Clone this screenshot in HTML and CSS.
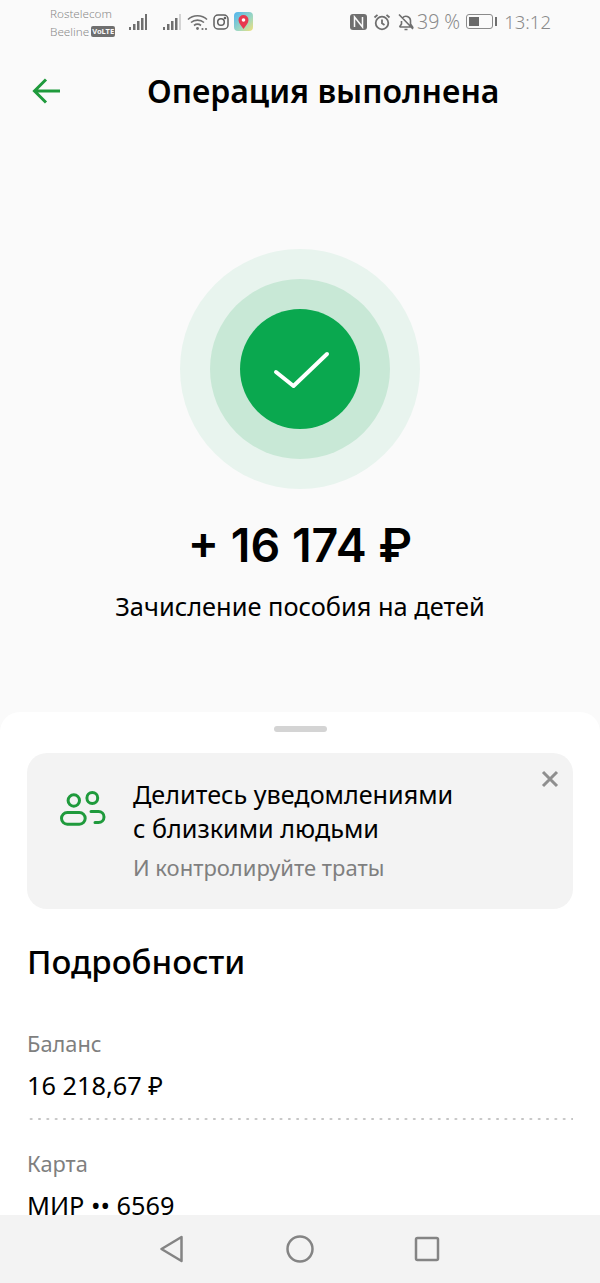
FILE: index.html
```html
<!DOCTYPE html>
<html lang="ru">
<head>
  <meta charset="UTF-8" />
  <title>Операция выполнена</title>
  <link rel="stylesheet" href="styles.css">
</head>
<body>
  <div class="screen">
    <div class="status-bar">
      <div class="operators">
        <div>Rostelecom</div>
        <div class="op-row">Beeline <span class="volte">VoLTE</span></div>
      </div>
      <svg class="signal" width="18" height="18" viewBox="0 0 18 18">
        <g fill="#6f6f6f">
          <rect x="0" y="14" width="2" height="3"/><rect x="4" y="11" width="2.500" height="6"/>
          <rect x="8" y="8" width="2.500" height="9"/><rect x="12" y="5" width="2.500" height="12"/>
          <rect x="16" y="1" width="2" height="16"/>
        </g>
      </svg>
      <svg class="signal second" width="18" height="18" viewBox="0 0 18 18">
        <g fill="#6f6f6f">
          <rect x="0" y="14" width="2" height="3"/><rect x="4" y="11" width="2.500" height="6"/>
          <rect x="8" y="8" width="2.500" height="9"/><rect x="12" y="5" width="2.500" height="12"/>
        </g>
        <rect x="16" y="1" width="2" height="16" fill="#d4d4d4"/>
      </svg>
      <svg class="wifi" width="21" height="18" viewBox="0 0 21 18" fill="none" stroke="#6f6f6f" stroke-width="1.600">
        <path d="M1 6.500C6 1.500 15 1.500 20 6.500"/>
        <path d="M4 9.500C7.500 6.300 13.500 6.300 17 9.500"/>
        <path d="M7 12.500C9 11 12 11 14 12.500"/>
        <circle cx="10.500" cy="15.500" r="1.400" fill="#6f6f6f" stroke="none"/>
        <circle cx="15.500" cy="16" r="1.100" fill="#6f6f6f" stroke="none"/>
        <circle cx="19" cy="16" r="1.100" fill="#6f6f6f" stroke="none"/>
      </svg>
      <svg class="insta" width="16" height="16" viewBox="0 0 16 16" fill="none" stroke="#5f5f5f" stroke-width="1.500">
        <rect x="1" y="1" width="14" height="14" rx="4"/>
        <circle cx="8" cy="8" r="3.300"/>
        <circle cx="12" cy="4" r=".6" fill="#5f5f5f"/>
      </svg>
      <svg class="maps" width="19" height="19" viewBox="0 0 19 19">
        <defs>
          <linearGradient id="mapbg" x1="0" y1="0" x2="1" y2="1">
            <stop offset="0" stop-color="#4fb4f0"/>
            <stop offset=".6" stop-color="#9fd8c0"/>
            <stop offset="1" stop-color="#f3e07a"/>
          </linearGradient>
        </defs>
        <rect width="19" height="19" rx="4" fill="url(#mapbg)"/>
        <path d="M9.500 17C7 13.500 4.500 11 4.500 8A5 5 0 0 1 14.500 8C14.500 11 12 13.500 9.500 17Z" fill="#e8384f"/>
        <circle cx="9.500" cy="8" r="1.800" fill="#fff"/>
      </svg>
      <div class="status-right">
        <svg width="17" height="18" viewBox="0 0 17 18">
          <rect x="0" y="1" width="17" height="16" rx="3" fill="#6f6f6f"/>
          <path d="M4.500 14V4L12.500 14V4" fill="none" stroke="#fafafa" stroke-width="1.500"/>
        </svg>
        <svg class="alarm" width="18" height="18" viewBox="0 0 18 18" fill="none" stroke="#6f6f6f" stroke-width="1.800">
          <circle cx="9" cy="10" r="6.300"/>
          <path d="M9 6.500V10.300L11.500 12M1.500 4.500L4.500 1.800M16.500 4.500L13.500 1.800"/>
        </svg>
        <svg class="bell" width="16" height="18" viewBox="0 0 16 18" fill="none" stroke="#6f6f6f" stroke-width="1.600">
          <path d="M1.500 14H14.500L12.500 11V7.500A4.500 4.500 0 0 0 4.500 5M3.500 8V11L1.500 14M6.500 16.500H9.500M1 1.500L15 16"/>
        </svg>
        <span class="battery-pct">39 %</span>
        <div class="battery"><div class="battery-level"></div></div>
        <span class="clock">13:12</span>
      </div>
    </div>

    <div class="toolbar">
      <svg class="back" width="28" height="28" viewBox="0 0 28 28" fill="none" stroke="#1f9a3c" stroke-width="3">
        <path d="M28 14H3.500M14 2.500L2.500 14L14 25.500"/>
      </svg>
      <h1>Операция выполнена</h1>
    </div>

    <div class="result">
      <div class="ring-outer">
        <div class="ring-inner">
          <div class="ring-core">
            <svg class="check" width="58" height="38" viewBox="0 0 58 38" fill="none" stroke="#fff" stroke-width="4" stroke-linecap="round" stroke-linejoin="round">
              <path d="M4 21L21.500 35L55 3"/>
            </svg>
          </div>
        </div>
      </div>
      <div class="amount">+ 16 174 ₽</div>
      <div class="purpose">Зачисление пособия на детей</div>
    </div>

    <div class="sheet">
      <div class="handle"></div>
      <div class="notice">
        <svg class="people" width="48" height="41" viewBox="0 0 48 41" fill="none" stroke="#1f9a3c" stroke-width="3" stroke-linecap="round">
          <circle cx="14.800" cy="13.500" r="5.700"/>
          <circle cx="33.300" cy="11" r="5.400"/>
          <rect x="2.500" y="25.500" width="23.700" height="11.700" rx="5.850"/>
          <path d="M32 24.500H39.500A5.500 5.500 0 0 1 39.500 35.500H36"/>
        </svg>
        <div class="notice-text">
          <div class="notice-title">Делитесь уведомлениями<br>с близкими людьми</div>
          <div class="notice-sub">И контролируйте траты</div>
        </div>
        <svg class="notice-close" width="18" height="18" viewBox="0 0 18 18" fill="none" stroke="#8f8f8f" stroke-width="3">
          <path d="M2 2L16 16M16 2L2 16"/>
        </svg>
      </div>
      <h2>Подробности</h2>
      <div class="detail dotted">
        <div class="detail-label">Баланс</div>
        <div class="detail-value">16 218,67 ₽</div>
      </div>
      <div class="detail">
        <div class="detail-label">Карта</div>
        <div class="detail-value">МИР •• 6569</div>
      </div>
    </div>

    <div class="nav-bar">
      <svg width="26" height="30" viewBox="0 0 26 30" fill="none" stroke="#848484" stroke-width="2.500" stroke-linejoin="round">
        <path d="M21.500 3V27L1.500 15Z"/>
      </svg>
      <svg width="28" height="28" viewBox="0 0 28 28" fill="none" stroke="#848484" stroke-width="2.500">
        <circle cx="14" cy="14" r="12.500"/>
      </svg>
      <svg width="26" height="26" viewBox="0 0 26 26" fill="none" stroke="#848484" stroke-width="2.500" stroke-linejoin="round">
        <rect x="2" y="2" width="22" height="22" rx="1.500"/>
      </svg>
    </div>
  </div>
</body>
</html>
```

FILE: styles.css
```css
body {
  margin: 0;
  font-family: 'Noto Sans', 'Open Sans', sans-serif;
  background: #fafafa;
  color: #000;
}

.screen {
  width: 600px;
  height: 1283px;
  display: flex;
  flex-direction: column;
  overflow: hidden;
}

/* Status bar */
.status-bar {
  height: 40px;
  padding: 3px 49px 0 50px;
  box-sizing: border-box;
  display: flex;
  align-items: center;
  color: #8a8a8a;
}

.operators {
  width: 79px;
  font-size: 11.700px;
  line-height: 18px;
  font-weight: 300;
  padding-top: 1px;
}

.op-row {
  display: flex;
  align-items: center;
  gap: 2px;
  white-space: nowrap;
}

.volte {
  background: #6f6f6f;
  color: #fafafa;
  font-size: 7.500px;
  font-weight: 700;
  line-height: 11px;
  padding: 0 1px;
  border-radius: 2px;
}

.signal { margin-right: 16px; }
.signal.second { margin-right: 6px; }
.wifi { margin-right: 5px; }
.insta { margin-right: 5px; }

.status-right {
  margin-left: auto;
  display: flex;
  align-items: center;
}

.alarm { margin-left: 6px; }
.bell { margin-left: 7px; }

.battery-pct,
.clock {
  font-size: 19.500px;
  font-weight: 300;
}

.battery-pct { margin-left: 3px; }

.battery {
  width: 27px;
  height: 15px;
  margin-left: 6px;
  padding: 2px;
  box-sizing: border-box;
  border: 1px solid #8a8a8a;
  border-radius: 3px;
  position: relative;
}

.battery::after {
  content: '';
  position: absolute;
  right: -5px;
  top: 2px;
  width: 2px;
  height: 9px;
  background: #6f6f6f;
}

.battery-level {
  width: 10px;
  height: 100%;
  background: #6a6a6a;
}

.clock {
  margin-left: 11px;
  font-size: 18.500px;
}

/* Toolbar */
.toolbar {
  height: 102px;
  padding-left: 32px;
  display: flex;
  align-items: center;
  box-sizing: border-box;
}

.back { flex: none; }

h1 {
  margin: 0 0 2px 87px;
  font-size: 32px;
  font-weight: 600;
  white-space: nowrap;
}

/* Result */
.result {
  height: 570px;
  padding-top: 107px;
  box-sizing: border-box;
  display: flex;
  flex-direction: column;
  align-items: center;
}

.ring-outer,
.ring-inner,
.ring-core {
  border-radius: 50%;
  display: flex;
  align-items: center;
  justify-content: center;
}

.ring-outer { width: 240px; height: 240px; background: #e8f4ee; }
.ring-inner { width: 180px; height: 180px; background: #c8e8d6; }
.ring-core { width: 120px; height: 120px; background: #0aa84f; }

.check { margin: 2px 0 0 2px; }

.amount {
  margin-top: 23px;
  font-family: 'Inter', sans-serif;
  font-size: 46.500px;
  line-height: 66px;
  font-weight: 600;
}

.purpose {
  margin-top: 12px;
  font-size: 25.400px;
  line-height: 32px;
}

/* Bottom sheet */
.sheet {
  flex: 1;
  min-height: 0;
  background: #fff;
  border-radius: 20px 20px 0 0;
  padding: 14px 27px 0;
  overflow: hidden;
}

.handle {
  width: 53px;
  height: 6px;
  margin: 0 auto 21px;
  background: #d4d4d4;
  border-radius: 3px;
}

.notice {
  height: 156px;
  padding: 24px 14px 0 32px;
  box-sizing: border-box;
  background: #f3f3f3;
  border-radius: 20px;
  display: flex;
  align-items: flex-start;
}

.people { margin-top: 10px; flex: none; }

.notice-text { margin-left: 26px; flex: 1; }

.notice-title {
  font-size: 25.200px;
  line-height: 34px;
}

.notice-sub {
  margin-top: 7px;
  font-size: 22px;
  line-height: 30px;
  color: #7f7f7f;
}

.notice-close { flex: none; margin-top: -7px; }

h2 {
  margin: 31px 0 0;
  font-size: 33px;
  line-height: 44px;
  font-weight: 500;
}

.detail { padding-top: 30px; }

.dotted {
  margin-top: 16px;
  padding-bottom: 18px;
  background: radial-gradient(circle, #c4c4c4 1px, transparent 1.300px) left bottom / 8.330px 2px repeat-x;
}

.detail-label {
  font-size: 21.800px;
  line-height: 28px;
  color: #7f7f7f;
}

.detail-value {
  margin-top: 10px;
  font-size: 25.300px;
  line-height: 34px;
}

/* Android nav */
.nav-bar {
  height: 68px;
  flex: none;
  background: #f3f3f3;
  display: flex;
  align-items: center;
  justify-content: center;
  gap: 100px;
}
```
